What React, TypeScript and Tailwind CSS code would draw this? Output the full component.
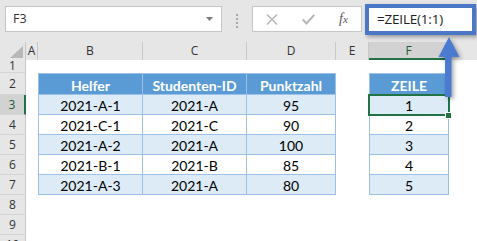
import React from "react";

const widths = [12, 105, 104, 89, 33, 80];
const letters = ["A", "B", "C", "D", "E", "F"];

type Row = { n: number; h: string; cells?: [string, string, string, string] | null; header?: boolean; alt?: boolean };

const rows: Row[] = [
  { n: 1, h: "h-[13px]" },
  { n: 2, h: "h-[22px]", header: true, cells: ["Helfer", "Studenten-ID", "Punktzahl", "ZEILE"] },
  { n: 3, h: "h-[20px]", alt: true, cells: ["2021-A-1", "2021-A", "95", "1"] },
  { n: 4, h: "h-[20px]", cells: ["2021-C-1", "2021-C", "90", "2"] },
  { n: 5, h: "h-[20px]", alt: true, cells: ["2021-A-2", "2021-A", "100", "3"] },
  { n: 6, h: "h-[20px]", cells: ["2021-B-1", "2021-B", "85", "4"] },
  { n: 7, h: "h-[20px]", alt: true, cells: ["2021-A-3", "2021-A", "80", "5"] },
  { n: 8, h: "h-[20px]" },
  { n: 9, h: "h-[20px]" },
  { n: 10, h: "h-[20px]" },
];

const uiFont = { fontFamily: '"Open Sans", "Noto Sans", sans-serif' };
const cellFont = { fontFamily: 'Lato, "Open Sans", sans-serif' };

function TableCell({ text, w, header, alt, first }: { text: string; w: number; header?: boolean; alt?: boolean; first?: boolean }) {
  const bg = header ? "bg-[#5b9bd5] text-white font-bold" : alt ? "bg-[#ddebf7] text-black" : "bg-white text-black";
  return (
    <div
      className={`shrink-0 h-full border-r border-b border-[#9bc2e6] ${first ? "border-l" : ""} ${header ? "border-t pt-[4px]" : "pt-[3px]"} ${bg} text-[14px] leading-[16px] text-center`}
      style={{ width: w, ...cellFont }}
    >
      {text}
    </div>
  );
}

export default function App() {
  return (
    <div className="w-[477px] h-[241px] overflow-hidden bg-white relative" style={uiFont}>
      {/* Formula bar */}
      <div className="h-[42px] bg-[#e6e6e6] flex items-start">
        <div className="ml-[5px] mt-[6px] w-[217px] h-[26px] bg-white border border-[#c6c6c6] flex items-center justify-between pl-[7px] pr-[8px]">
          <span className="text-[12.5px] text-[#333] leading-none">F3</span>
          <svg width="7" height="4" viewBox="0 0 7 4"><path d="M0 0 L7 0 L3.5 4 Z" fill="#7a7a7a" /></svg>
        </div>
        <div className="w-[30px] h-[42px] flex flex-col items-center pt-[14px] gap-[2px]">
          <div className="w-[2px] h-[2px] bg-[#a8a8a8]" />
          <div className="w-[2px] h-[2px] bg-[#a8a8a8]" />
          <div className="w-[2px] h-[2px] bg-[#a8a8a8]" />
          <div className="w-[2px] h-[2px] bg-[#a8a8a8]" />
        </div>
        <div className="mt-[6px] w-[110px] h-[26px] bg-white border border-[#c6c6c6] flex items-center">
          <svg className="ml-[13px]" width="12" height="11" viewBox="0 0 12 11">
            <path d="M1 0.5 L11 10.5 M11 0.5 L1 10.5" stroke="#b4b4b4" strokeWidth="1.4" />
          </svg>
          <svg className="ml-[24px]" width="13" height="11" viewBox="0 0 13 11">
            <path d="M0.8 5.5 L4.5 9.5 L12.2 0.8" stroke="#b4b4b4" strokeWidth="2" fill="none" />
          </svg>
          <span
            className="ml-[24px] text-[14px] italic text-[#555] leading-none"
            style={{ fontFamily: '"Liberation Serif", "DejaVu Serif", serif' }}
          >
            f<span className="text-[11px]">x</span>
          </span>
        </div>
        <div className="ml-[3px] mt-[4px] w-[111px] h-[31px] bg-white border-[4px] border-[#4a77c6] shadow-[2px_2px_4px_rgba(0,0,0,0.35)] flex items-center pl-[8px]">
          <span className="text-[13.5px] text-[#222] leading-none tracking-[-0.2px]">=ZEILE(1:1)</span>
        </div>
      </div>

      {/* Column headers */}
      <div className="h-[18px] flex bg-[#e6e6e6] text-[12px] text-[#333]">
        <div className="w-[26px] shrink-0 h-full border-r border-[#c8c8c8] relative">
          <svg className="absolute left-[10px] top-[4px]" width="13" height="12" viewBox="0 0 13 12">
            <path d="M13 0 L13 12 L0 12 Z" fill="#b8b8b8" />
          </svg>
        </div>
        {letters.map((l, i) => (
          <div
            key={l}
            className={`shrink-0 h-full border-r border-[#c8c8c8] flex items-center justify-center leading-none ${
              l === "F" ? "bg-[#d2d2d2] border-b-2 border-b-[#217346] text-[#1d5c38]" : ""
            }`}
            style={{ width: widths[i] }}
          >
            <span className={l === "F" ? "mt-[2px]" : ""}>{l}</span>
          </div>
        ))}
        <div className="flex-1 h-full" />
      </div>

      {/* Rows */}
      <div>
        {rows.map((r) => (
          <div key={r.n} className={`flex ${r.h}`}>
            <div
              className={`w-[26px] shrink-0 h-full border-b border-[#d4d4d4] flex items-center justify-center text-[12px] leading-none overflow-hidden ${
                r.n === 3 ? "bg-[#d2d2d2] border-r-2 border-r-[#217346] text-[#1d5c38]" : "bg-[#e6e6e6] border-r border-r-[#c8c8c8] text-[#333]"
              }`}
            >
              {r.n}
            </div>
            <div className="w-[12px] shrink-0" />
            {r.cells ? (
              <>
                <TableCell text={r.cells[0]} w={105} header={r.header} alt={r.alt} first />
                <TableCell text={r.cells[1]} w={104} header={r.header} alt={r.alt} />
                <TableCell text={r.cells[2]} w={89} header={r.header} alt={r.alt} />
                <div className="w-[33px] shrink-0" />
                <TableCell text={r.cells[3]} w={80} header={r.header} alt={r.alt} first />
              </>
            ) : (
              <div className="flex-1" />
            )}
          </div>
        ))}
      </div>

      {/* Selected cell F3 */}
      <div className="absolute left-[368px] top-[94px] w-[82px] h-[22px] border-2 border-[#217346] pointer-events-none" />
      <div className="absolute left-[445px] top-[112px] w-[7px] h-[7px] bg-[#217346] border border-white" />

      {/* Arrow */}
      <svg
        className="absolute left-[436px] top-[34px]"
        width="30"
        height="68"
        viewBox="0 0 30 68"
        style={{ filter: "drop-shadow(2px 2px 2px rgba(0,0,0,0.35))" }}
      >
        <path d="M13 3 L2.5 23 L9 23 L9 63 L15.5 63 L15.5 23 L23.5 23 Z" fill="#4a7bd0" />
      </svg>
    </div>
  );
}
